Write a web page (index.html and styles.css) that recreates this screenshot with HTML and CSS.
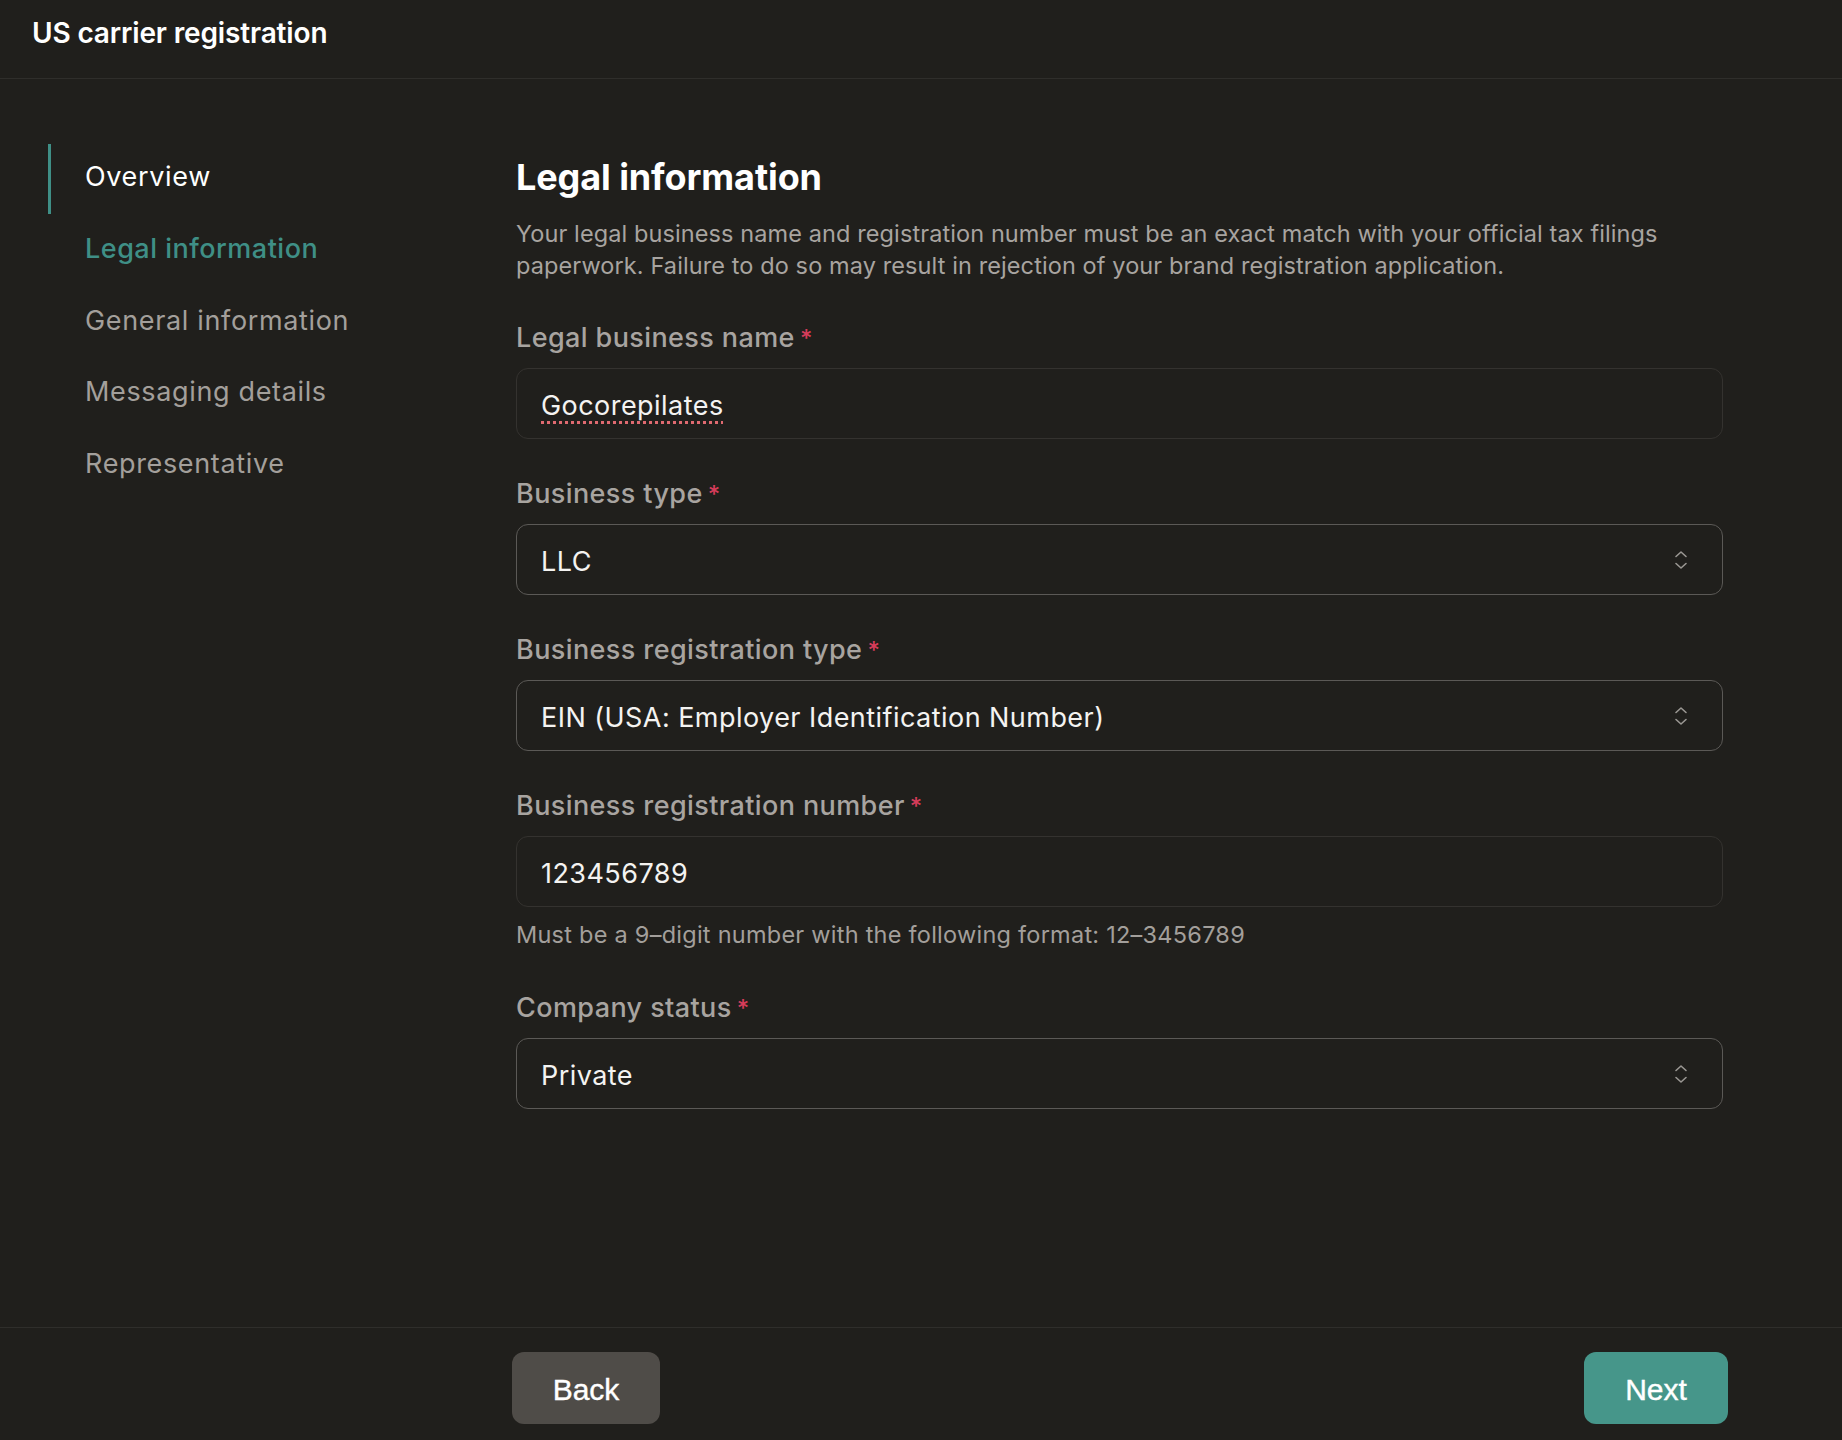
FILE: index.html
```html
<!DOCTYPE html>
<html lang="en">
<head>
<meta charset="utf-8">
<title>US carrier registration</title>
<link rel="stylesheet" href="styles.css">
</head>
<body>
<div class="app">
  <header class="topbar">
    <h1 class="title">US carrier registration</h1>
  </header>
  <div class="content">
    <nav class="sidenav">
      <a class="nav-item nav-current">Overview</a>
      <a class="nav-item nav-active">Legal information</a>
      <a class="nav-item">General information</a>
      <a class="nav-item">Messaging details</a>
      <a class="nav-item">Representative</a>
    </nav>
    <main class="form">
      <h2 class="heading">Legal information</h2>
      <p class="desc">Your legal business name and registration number must be an exact match with your official tax filings paperwork. Failure to do so may result in rejection of your brand registration application.</p>

      <div class="field">
        <div class="label">Legal business name<span class="req">*</span></div>
        <div class="control"><span class="value misspelled">Gocorepilates</span></div>
      </div>

      <div class="field">
        <div class="label">Business type<span class="req">*</span></div>
        <div class="control select"><span class="value">LLC</span>
          <svg class="chev" width="14" height="20" viewBox="0 0 14 20"><path d="M2 6.5 L7 2 L12 6.5 M2 13.5 L7 18 L12 13.5" fill="none" stroke="#9a9793" stroke-width="1.6" stroke-linecap="round" stroke-linejoin="round"/></svg>
        </div>
      </div>

      <div class="field">
        <div class="label">Business registration type<span class="req">*</span></div>
        <div class="control select"><span class="value">EIN (USA: Employer Identification Number)</span>
          <svg class="chev" width="14" height="20" viewBox="0 0 14 20"><path d="M2 6.5 L7 2 L12 6.5 M2 13.5 L7 18 L12 13.5" fill="none" stroke="#9a9793" stroke-width="1.6" stroke-linecap="round" stroke-linejoin="round"/></svg>
        </div>
      </div>

      <div class="field field-help">
        <div class="label">Business registration number<span class="req">*</span></div>
        <div class="control"><span class="value">123456789</span></div>
        <div class="help">Must be a 9–digit number with the following format: 12–3456789</div>
      </div>

      <div class="field">
        <div class="label">Company status<span class="req">*</span></div>
        <div class="control select"><span class="value">Private</span>
          <svg class="chev" width="14" height="20" viewBox="0 0 14 20"><path d="M2 6.5 L7 2 L12 6.5 M2 13.5 L7 18 L12 13.5" fill="none" stroke="#9a9793" stroke-width="1.6" stroke-linecap="round" stroke-linejoin="round"/></svg>
        </div>
      </div>
    </main>
  </div>
  <footer class="footer">
    <button class="btn btn-back">Back</button>
    <button class="btn btn-next">Next</button>
  </footer>
</div>
</body>
</html>
```

FILE: styles.css
```css
* { box-sizing: border-box; }
html, body { margin: 0; padding: 0; }
body {
  background: #201f1c;
  color: #f2f1ef;
  font-family: Inter, "Noto Sans", sans-serif;
}
.app {
  height: 100vh;
  display: flex;
  flex-direction: column;
}
.topbar {
  height: 79px;
  border-bottom: 1px solid #2f2e2b;
  padding: 16px 32px 0;
}
.title {
  margin: 0;
  font-size: 28px;
  line-height: 34px;
  font-weight: 600;
  letter-spacing: -0.15px;
  color: #ffffff;
}
.content {
  flex: 1;
  display: grid;
  grid-template-columns: 516px 1207px;
  padding-top: 65px;
}
.sidenav {
  display: flex;
  flex-direction: column;
  gap: 1.75px;
  padding-left: 48px;
}
.nav-item {
  display: block;
  height: 70px;
  line-height: 66px;
  padding: 0 0 4px 37px;
  font-size: 27px;
  color: #a39f9b;
  letter-spacing: 0.65px;
}
.nav-current {
  color: #ffffff;
  border-left: 3px solid #3f8f86;
  padding-left: 34px;
}
.nav-active {
  color: #3f8f86;
  font-weight: 500;
  letter-spacing: 0.5px;
}
.form {
  padding-top: 11px;
}
.heading {
  margin: 0;
  font-size: 36px;
  line-height: 44px;
  font-weight: 700;
  letter-spacing: -0.1px;
  color: #ffffff;
}
.desc {
  margin: 19px 0 38px;
  font-size: 23.5px;
  line-height: 32px;
  color: #a8a4a0;
  letter-spacing: 0.1px;
}
.field {
  margin-bottom: 37px;
}
.field-help {
  margin-bottom: 39px;
}
.label {
  font-size: 27px;
  line-height: 36px;
  color: #a8a4a0;
  font-weight: 500;
  letter-spacing: 0.4px;
  margin-bottom: 12px;
}
.req {
  color: #d63c5a;
  font-size: 24px;
  line-height: 0;
  margin-left: 5px;
}
.control {
  height: 71px;
  border: 1.5px solid #34322f;
  border-radius: 12px;
  padding: 0 24px;
  display: flex;
  align-items: center;
  justify-content: space-between;
}
.control.select {
  border-color: #5b5956;
}
.value {
  font-size: 27px;
  line-height: 36px;
  padding-top: 4px;
  color: #f4f3f1;
  letter-spacing: 0.45px;
}
.misspelled {
  text-decoration: underline dotted #e06a70;
  text-decoration-thickness: 2.5px;
  text-underline-offset: 6px;
}
.chev {
  margin-right: 10px;
}
.help {
  margin-top: 12px;
  font-size: 23.5px;
  line-height: 32px;
  color: #a39f9b;
  letter-spacing: 0.25px;
}
.footer {
  height: 113px;
  border-top: 1px solid #2f2e2b;
  padding: 24px 114px 0 512px;
  display: flex;
  justify-content: space-between;
  align-items: flex-start;
}
.btn {
  height: 72px;
  border: none;
  border-radius: 12px;
  font-family: "Liberation Sans", Arial, sans-serif;
  font-size: 30px;
  font-weight: 500;
  -webkit-text-stroke: 0.4px #ffffff;
  color: #ffffff;
  padding: 4px 0 0;
  cursor: pointer;
}
.btn-back {
  width: 148px;
  background: #4f4c48;
}
.btn-next {
  width: 144px;
  background: #46968a;
}
```
